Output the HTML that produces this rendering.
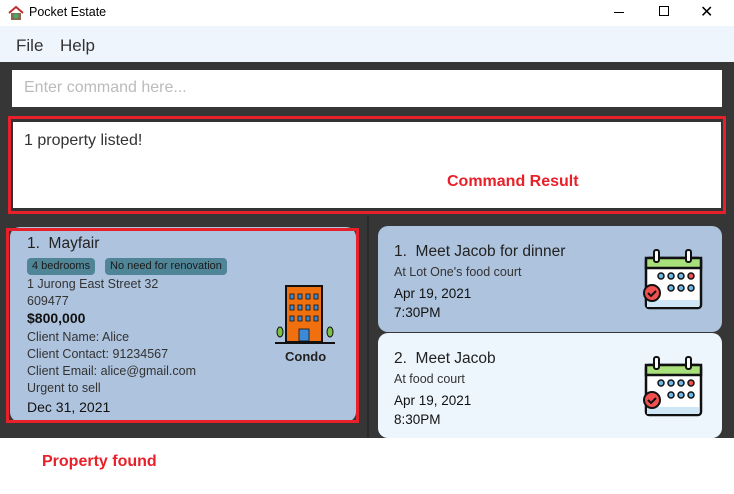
<!DOCTYPE html>
<html><head><style>
*{margin:0;padding:0;box-sizing:border-box}
body{width:734px;height:494px;position:relative;background:#fff;font-family:"Liberation Sans",sans-serif;overflow:hidden;color:#222}
.a{position:absolute}
.tag{height:17px;line-height:17px;padding:0 5px;background:#4f8597;border-radius:4px;font-size:11px;color:#1a1a1a}
</style></head><body>
<div class="a" style="left:0;top:0;width:734px;height:26px;background:#fff">
<svg class="a" style="left:8px;top:5px" width="16" height="16" viewBox="0 0 16 16"><path d="M1 8L8 2l7 6" stroke="#b33" stroke-width="2" fill="none"/><rect x="3" y="8" width="10" height="7" fill="#8a6a4a"/><circle cx="8" cy="11" r="2.5" fill="#4a7"/></svg>
<div class="a" style="left:29px;top:5px;font-size:12.5px;color:#000">Pocket Estate</div>
<div class="a" style="left:614px;top:12px;width:10px;height:1px;background:#000"></div>
<div class="a" style="left:659px;top:6px;width:10px;height:10px;border:1px solid #000"></div>
<div class="a" style="left:700px;top:2px;font-size:16px;color:#000">✕</div>
</div>
<div class="a" style="left:0;top:26px;width:734px;height:36px;background:#eef5fd;font-size:17px;color:#333">
<span class="a" style="left:16px;top:10px">File</span><span class="a" style="left:60px;top:10px">Help</span></div>
<div class="a" style="left:0;top:62px;width:734px;height:376px;background:#363636"></div>
<div class="a" style="left:12px;top:70px;width:710px;height:37px;background:#fff;font-size:16px;color:#bbb;padding:9px 12px">Enter command here...</div>
<div class="a" style="left:8px;top:116px;width:718px;height:98px;border:3px solid #e8202a;background:#333"></div>
<div class="a" style="left:13px;top:122px;width:708px;height:86px;background:#fff"></div>
<div class="a" style="left:24px;top:132px;font-size:16px;color:#333">1 property listed!</div>
<div class="a" style="left:447px;top:173px;font-size:16px;font-weight:bold;color:#e8202a">Command Result</div>
<div class="a" style="left:367px;top:216px;width:2px;height:222px;background:#2a2a2a"></div>
<div class="a" style="left:10px;top:227px;width:346px;height:195px;background:#aec3dd;border-radius:10px"></div>
<div class="a" style="left:6px;top:228px;width:353px;height:195px;border:3px solid #e8202a"></div>
<div class="a" style="left:27px;top:235px;font-size:15.5px;color:#222">1.&nbsp; Mayfair</div>
<div class="a tag" style="left:27px;top:258px">4 bedrooms</div>
<div class="a tag" style="left:105px;top:258px">No need for renovation</div>
<div class="a" style="left:27px;top:276px;font-size:12.5px;line-height:17px;color:#333">1 Jurong East Street 32<br>609477</div>
<div class="a" style="left:27px;top:310px;font-size:14px;color:#111;font-weight:bold;font-weight:600">$800,000</div>
<div class="a" style="left:27px;top:329px;font-size:12.5px;line-height:17px;color:#333">Client Name: Alice<br>Client Contact: 91234567<br>Client Email: alice@gmail.com<br>Urgent to sell</div>
<div class="a" style="left:27px;top:399px;font-size:14px;color:#111">Dec 31, 2021</div>
<svg class="a" style="left:275px;top:284px" width="62" height="62" viewBox="0 0 62 62"><rect x="11" y="2" width="36" height="56" fill="#f07010" stroke="#111" stroke-width="2"/><g fill="#3a8ad8" stroke="#111" stroke-width=".8"><rect x="15" y="10" width="4" height="5"/><rect x="23" y="10" width="4" height="5"/><rect x="31" y="10" width="4" height="5"/><rect x="39" y="10" width="4" height="5"/><rect x="15" y="21" width="4" height="5"/><rect x="23" y="21" width="4" height="5"/><rect x="31" y="21" width="4" height="5"/><rect x="39" y="21" width="4" height="5"/><rect x="15" y="32" width="4" height="5"/><rect x="23" y="32" width="4" height="5"/><rect x="31" y="32" width="4" height="5"/><rect x="39" y="32" width="4" height="5"/><rect x="24" y="45" width="10" height="12"/></g><ellipse cx="5" cy="48" rx="3" ry="5" fill="#7bc043" stroke="#111"/><ellipse cx="55" cy="48" rx="3" ry="5" fill="#7bc043" stroke="#111"/><line x1="0" y1="59" x2="60" y2="59" stroke="#111" stroke-width="2"/></svg>
<div class="a" style="left:285px;top:349px;font-size:13px;font-weight:bold;color:#222">Condo</div>
<div class="a" style="left:378px;top:226px;width:344px;height:106px;background:#aec3dd;border-radius:10px"></div>
<div class="a" style="left:378px;top:333px;width:344px;height:105px;background:#eef6fd;border-radius:10px"></div>
<div class="a" style="left:394px;top:243px;font-size:15.5px;color:#222">1.&nbsp; Meet Jacob for dinner</div>
<div class="a" style="left:394px;top:265px;font-size:12.5px;color:#333">At Lot One's food court</div>
<div class="a" style="left:394px;top:284px;font-size:13.5px;line-height:19px;color:#111">Apr 19, 2021<br>7:30PM</div>
<div class="a" style="left:394px;top:350px;font-size:15.5px;color:#222">2.&nbsp; Meet Jacob</div>
<div class="a" style="left:394px;top:372px;font-size:12.5px;color:#333">At food court</div>
<div class="a" style="left:394px;top:391px;font-size:13.5px;line-height:19px;color:#111">Apr 19, 2021<br>8:30PM</div>
<svg class="a" style="left:640px;top:248px" width="64" height="64" viewBox="0 0 64 64"><g id="cal"><rect x="6" y="10" width="55" height="50" rx="3" fill="#fff" stroke="#111" stroke-width="2.5"/><rect x="6" y="10" width="55" height="10" fill="#a8e07a" stroke="#111" stroke-width="2.5"/><rect x="14" y="2" width="5" height="12" rx="2" fill="#fff" stroke="#111" stroke-width="2"/><rect x="46" y="2" width="5" height="12" rx="2" fill="#fff" stroke="#111" stroke-width="2"/><g stroke="#111" stroke-width="1.5"><circle cx="21" cy="28" r="3" fill="#6cb8e8"/><circle cx="31" cy="28" r="3" fill="#6cb8e8"/><circle cx="41" cy="28" r="3" fill="#6cb8e8"/><circle cx="51" cy="28" r="3" fill="#f05050"/><circle cx="31" cy="40" r="3" fill="#6cb8e8"/><circle cx="41" cy="40" r="3" fill="#6cb8e8"/><circle cx="51" cy="40" r="3" fill="#6cb8e8"/></g><rect x="7" y="52" width="52" height="7" fill="#cfe6f6"/><circle cx="12" cy="45" r="8" fill="#f05050" stroke="#111" stroke-width="2"/><path d="M8 45l3 3 5-5" stroke="#111" stroke-width="2" fill="none"/></g></svg>
<svg class="a" style="left:640px;top:355px" width="64" height="64" viewBox="0 0 64 64"><use href="#cal"/></svg>
<div class="a" style="left:42px;top:453px;font-size:16px;font-weight:bold;color:#e8202a">Property found</div>
</body></html>
